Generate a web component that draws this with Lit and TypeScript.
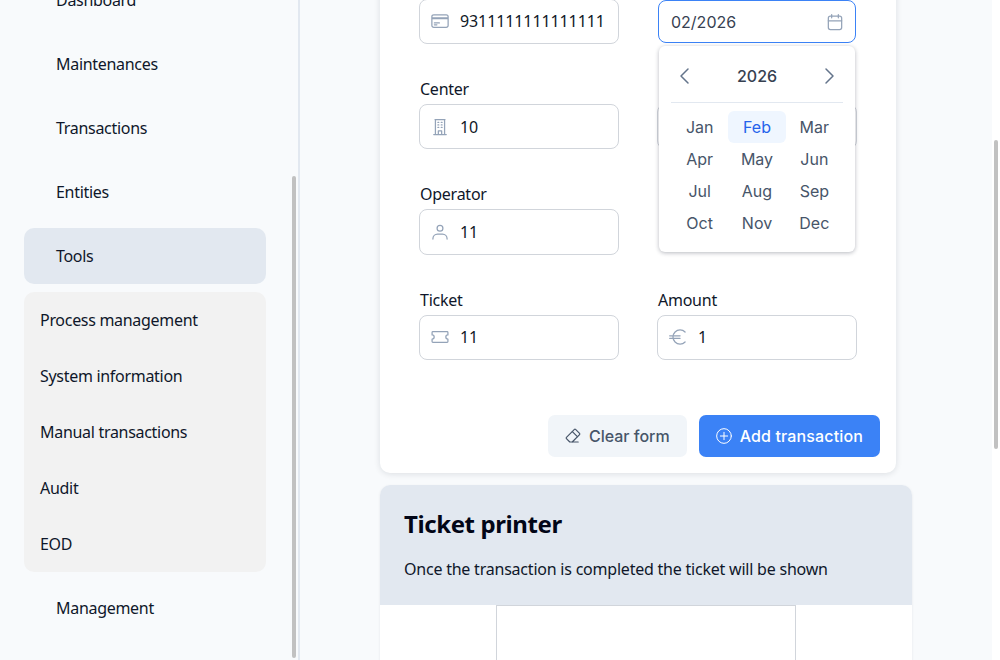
import { LitElement, html, css, svg } from 'lit';
import { customElement } from 'lit/decorators.js';

const icon = (body: unknown, size = 20, viewBox = '0 0 24 24') => html`
  <svg
    width=${size}
    height=${size}
    viewBox=${viewBox}
    fill="none"
    stroke="currentColor"
    stroke-width="1.5"
    stroke-linecap="round"
    stroke-linejoin="round"
  >
    ${body}
  </svg>
`;

const icons = {
  card: svg`<path d="M2.25 8.25h19.5M2.25 9h19.5m-16.5 5.25h6m-6 2.25h3m-3.75 3h15a2.25 2.25 0 002.25-2.25V6.75A2.25 2.25 0 0019.5 4.5h-15a2.25 2.25 0 00-2.25 2.25v10.5A2.25 2.25 0 004.5 19.5z" />`,
  building: svg`<path d="M4.5 21h15M6 3h12M6.5 3v18m11-18v18M9.5 6.5h1m-1 3h1m-1 3h1m3-6h1m-1 3h1m-1 3h1M10 21v-4.500h4V21" />`,
  user: svg`<circle cx="12" cy="7.500" r="3.500" /><path d="M3.500 20.500v-.5a5.500 5.500 0 0 1 5.500-5.500h6a5.500 5.500 0 0 1 5.500 5.500v.5" />`,
  ticket: svg`<path d="M3.500 5.500h17a1 1 0 0 1 1 1v3a2.500 2.500 0 0 0 0 5v3a1 1 0 0 1-1 1h-17a1 1 0 0 1-1-1v-3a2.500 2.500 0 0 0 0-5v-3a1 1 0 0 1 1-1z" />`,
  euro: svg`<path d="M20.500 6A8.500 8.500 0 1 0 20.500 18M2 10.500h12.500M2 13.500h12.500" />`,
  calendar: svg`<rect x="4" y="5" width="16" height="16" rx="2.500" /><path d="M4 10.500h16M8 3v4M16 3v4" />`,
  left: svg`<path d="M15 5l-7 7 7 7" />`,
  right: svg`<path d="M9 5l7 7-7 7" />`,
  eraser: svg`<path d="M19 20h-10.500l-4.210-4.300a1 1 0 0 1 0-1.410l10-10a1 1 0 0 1 1.410 0l5 5a1 1 0 0 1 0 1.410l-9.200 9.300" /><path d="M18 13.300l-6.300-6.300" />`,
  plus: svg`<circle cx="12" cy="12" r="11" /><path d="M12 6.500v11M6.500 12h11" />`,
};

const months = ['Jan', 'Feb', 'Mar', 'Apr', 'May', 'Jun', 'Jul', 'Aug', 'Sep', 'Oct', 'Nov', 'Dec'];

@customElement('app-root')
export class AppRoot extends LitElement {
  static styles = css`
    :host {
      display: flex;
      width: 1000px;
      height: 660px;
      overflow: hidden;
      background: #f8fafc;
      color: #0f172a;
      font-family: 'Noto Sans', sans-serif;
      font-size: 16px;
    }
    .sidebar {
      flex: none;
      display: flex;
      width: 298px;
      border-right: 2px solid #e2e8f0;
    }
    .nav {
      flex: 1;
      display: flex;
      flex-direction: column;
      gap: 8px;
      margin-top: -28px;
      padding: 0 24px;
      letter-spacing: -0.3px;
    }
    .nav-item {
      display: flex;
      align-items: center;
      flex: none;
      height: 56px;
      padding-left: 32px;
      border-radius: 10px;
    }
    .nav-item.active {
      background: #e2e8f0;
    }
    .submenu {
      display: flex;
      flex-direction: column;
      flex: none;
      background: #f2f2f2;
      border-radius: 10px;
    }
    .submenu .nav-item {
      padding-left: 16px;
    }
    .track {
      flex: none;
      width: 8px;
    }
    .sidebar .track {
      padding-top: 176px;
    }
    .thumb {
      width: 4px;
      margin-left: 2px;
      background: #c1c1c1;
      border-radius: 2px;
    }
    .sidebar .thumb {
      height: 482px;
    }
    .page-track {
      background: #fff;
      padding-top: 140px;
    }
    .page-track .thumb {
      height: 309px;
    }
    .main {
      flex: 1;
      padding-left: 80px;
      min-width: 0;
    }
    .form-card {
      width: 516px;
      margin-top: -60px;
      padding: 31.67px 16px 16px 0;
      box-sizing: border-box;
      background: #fff;
      border-radius: 10px;
      box-shadow: 0 1px 6px rgba(15, 23, 42, 0.12);
    }
    .form {
      display: grid;
      grid-template-columns: 200px 200px;
      column-gap: 38px;
      row-gap: 33px;
      padding-left: 39px;
    }
    .field {
      position: relative;
      display: flex;
      flex-direction: column;
    }
    .label {
      height: 24px;
      margin-bottom: 3px;
      padding-left: 1px;
      line-height: 24px;
      letter-spacing: -0.25px;
    }
    .input {
      display: flex;
      align-items: center;
      gap: 10px;
      height: 45.33px;
      padding: 0 10px;
      box-sizing: border-box;
      background: #fff;
      border: 1px solid #d1d5db;
      border-radius: 8px;
      letter-spacing: -0.1px;
      color: #111827;
      white-space: nowrap;
    }
    .input svg {
      flex: none;
      color: #94a3b8;
    }
    .input.date {
      justify-content: space-between;
      height: 43px;
      margin: 1.33px 1px 0;
      padding: 1px 10px 0 12px;
      border-color: #3b82f6;
      font-family: Inter, sans-serif;
      letter-spacing: 0;
      color: #374151;
    }
    .popover {
      position: absolute;
      top: 74.33px;
      left: 2px;
      width: 196px;
      box-sizing: border-box;
      padding: 12px 12px 13px;
      background: #fff;
      border-radius: 6px;
      box-shadow: 0 1px 4px rgba(15, 23, 42, 0.3);
      font-family: Inter, sans-serif;
      z-index: 1;
    }
    .pop-head {
      display: flex;
      align-items: center;
      justify-content: space-between;
      height: 36px;
      padding: 0 2px 8px;
      border-bottom: 1px solid #e2e8f0;
      color: #64748b;
    }
    .pop-year {
      font-weight: 500;
      color: #374151;
    }
    .months {
      display: grid;
      grid-template-columns: repeat(3, 1fr);
      grid-auto-rows: 32px;
      margin-top: 8px;
    }
    .month {
      display: flex;
      align-items: center;
      justify-content: center;
      border-radius: 6px;
      color: #475569;
    }
    .month.selected {
      background: #eff6ff;
      color: #2563eb;
    }
    .actions {
      display: flex;
      justify-content: flex-end;
      gap: 12px;
      margin-top: 55px;
    }
    .button {
      display: flex;
      align-items: center;
      gap: 8px;
      height: 42px;
      padding: 0 17px;
      border-radius: 7px;
      font-family: Inter, sans-serif;
      font-weight: 500;
    }
    .button.secondary {
      background: #f1f5f9;
      color: #475569;
    }
    .button.primary {
      background: #3b82f6;
      color: #fff;
      letter-spacing: 0.14px;
    }
    .ticket-card {
      width: 532px;
      height: 300px;
      margin-top: 12px;
      background: #fff;
      border-radius: 10px 10px 0 0;
      box-shadow: 0 1px 3px rgba(15, 23, 42, 0.08);
    }
    .ticket-head {
      height: 120px;
      padding: 23px 24px 0;
      box-sizing: border-box;
      background: #e2e8f0;
      border-radius: 10px 10px 0 0;
    }
    .ticket-head h2 {
      margin: 0 0 17px;
      font-size: 24px;
      line-height: 32px;
      font-weight: 700;
      letter-spacing: -0.4px;
      color: #020617;
    }
    .ticket-head p {
      margin: 0;
      line-height: 24px;
      letter-spacing: -0.22px;
    }
    .paper {
      width: 300px;
      height: 200px;
      margin-left: 116px;
      box-sizing: border-box;
      border: 1px solid #d1d5db;
    }
  `;

  private field(label: string, iconBody: unknown, value: string) {
    return html`
      <div class="field">
        <div class="label">${label}</div>
        <div class="input">${icon(iconBody)}<span>${value}</span></div>
      </div>
    `;
  }

  render() {
    return html`
      <aside class="sidebar">
        <nav class="nav">
          <div class="nav-item">Dashboard</div>
          <div class="nav-item">Maintenances</div>
          <div class="nav-item">Transactions</div>
          <div class="nav-item">Entities</div>
          <div class="nav-item active">Tools</div>
          <div class="submenu">
            <div class="nav-item">Process management</div>
            <div class="nav-item">System information</div>
            <div class="nav-item">Manual transactions</div>
            <div class="nav-item">Audit</div>
            <div class="nav-item">EOD</div>
          </div>
          <div class="nav-item">Management</div>
        </nav>
        <div class="track"><div class="thumb"></div></div>
      </aside>
      <main class="main">
        <section class="form-card">
          <div class="form">
            ${this.field('Card', icons.card, '9311111111111111')}
            <div class="field">
              <div class="label"></div>
              <div class="input date"><span>02/2026</span>${icon(icons.calendar)}</div>
              <div class="popover">
                <div class="pop-head">
                  ${icon(icons.left, 24)}
                  <span class="pop-year">2026</span>
                  ${icon(icons.right, 24)}
                </div>
                <div class="months">
                  ${months.map(
                    (m) => html`<div class="month ${m === 'Feb' ? 'selected' : ''}">${m}</div>`
                  )}
                </div>
              </div>
            </div>
            ${this.field('Center', icons.building, '10')}
            <div class="field">
              <div class="label"></div>
              <div class="input"></div>
            </div>
            ${this.field('Operator', icons.user, '11')}
            <div class="field"></div>
            ${this.field('Ticket', icons.ticket, '11')}
            ${this.field('Amount', icons.euro, '1')}
          </div>
          <div class="actions">
            <div class="button secondary">${icon(icons.eraser, 16, '2.5 2.5 20 20')}Clear form</div>
            <div class="button primary">${icon(icons.plus, 16)}Add transaction</div>
          </div>
        </section>
        <section class="ticket-card">
          <div class="ticket-head">
            <h2>Ticket printer</h2>
            <p>Once the transaction is completed the ticket will be shown</p>
          </div>
          <div class="paper"></div>
        </section>
      </main>
      <div class="track page-track"><div class="thumb"></div></div>
    `;
  }
}
